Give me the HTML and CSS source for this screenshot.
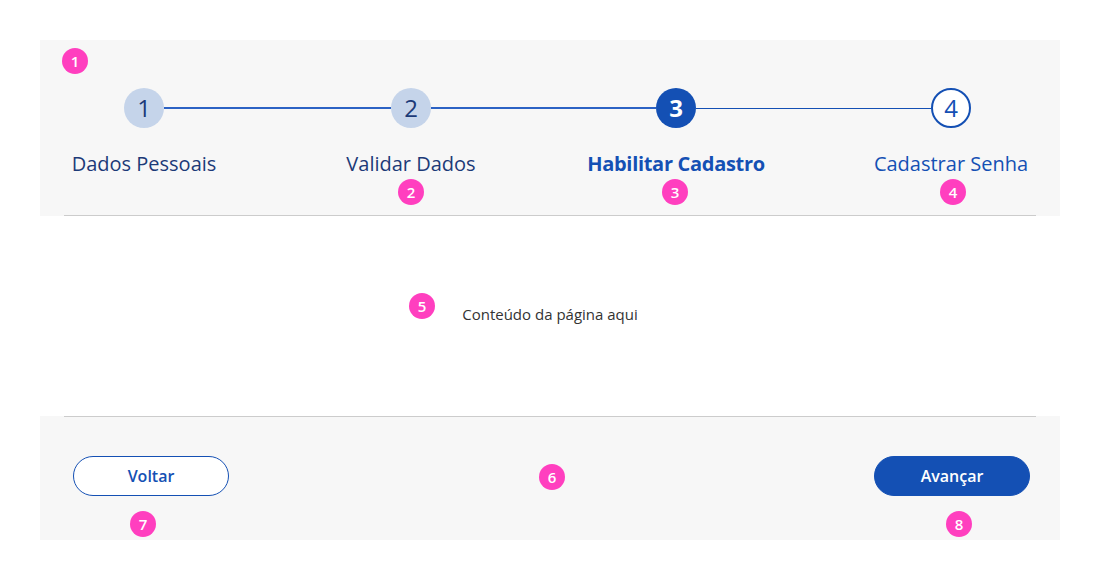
FILE: index.html
```html
<!DOCTYPE html>
<html lang="pt-BR">
<head>
<meta charset="utf-8">
<title>Cadastro</title>
<link rel="stylesheet" href="styles.css">
</head>
<body>
<div class="wizard">
  <header class="wizard-header">
    <div class="stepper">
      <div class="step step-done">
        <span class="step-circle">1</span>
        <span class="step-label">Dados Pessoais</span>
      </div>
      <div class="connector connector-done connector-first"></div>
      <div class="step step-done">
        <span class="step-circle">2</span>
        <span class="step-label">Validar Dados</span>
      </div>
      <div class="connector connector-done connector-second"></div>
      <div class="step step-current">
        <span class="step-circle">3</span>
        <span class="step-label">Habilitar Cadastro</span>
      </div>
      <div class="connector connector-next connector-third"></div>
      <div class="step step-next">
        <span class="step-circle">4</span>
        <span class="step-label">Cadastrar Senha</span>
      </div>
    </div>
    <div class="divider"></div>
  </header>

  <main class="wizard-content">
    <p class="content-text">Conteúdo da página aqui</p>
  </main>

  <footer class="wizard-footer">
    <div class="divider"></div>
    <div class="actions">
      <button class="btn btn-outline">Voltar</button>
      <button class="btn btn-primary">Avançar</button>
    </div>
  </footer>

  <span class="badge badge-1">1</span>
  <span class="badge badge-2">2</span>
  <span class="badge badge-3">3</span>
  <span class="badge badge-4">4</span>
  <span class="badge badge-5">5</span>
  <span class="badge badge-6">6</span>
  <span class="badge badge-7">7</span>
  <span class="badge badge-8">8</span>
</div>
</body>
</html>
```

FILE: styles.css
```css
* { box-sizing: border-box; }

html, body {
  margin: 0;
  background: #ffffff;
}

body {
  padding: 40px;
  font-family: "Open Sans", "Liberation Sans", sans-serif;
  color: #1c3a78;
}

.wizard {
  position: relative;
  width: 1020px;
}

.wizard-header {
  background: #f7f7f7;
  padding-top: 48px;
}

.stepper {
  display: flex;
  align-items: flex-start;
  padding: 0 89px 39px 84px;
}

.step {
  width: 40px;
  flex: none;
  display: flex;
  flex-direction: column;
  align-items: center;
}

.step-circle {
  width: 40px;
  height: 40px;
  border-radius: 50%;
  display: flex;
  align-items: center;
  justify-content: center;
  font-size: 24px;
  line-height: 1;
}

.step-label {
  margin-top: 24px;
  white-space: nowrap;
  font-size: 20px;
  line-height: 24px;
}

.step-done .step-circle {
  background: #c5d4ea;
  color: #1c3a78;
}
.step-done .step-label { color: #1c3a78; }

.step-current .step-circle {
  background: #1450b4;
  color: #ffffff;
  font-weight: 700;
}
.step-current .step-label {
  color: #1450b4;
  font-weight: 700;
  letter-spacing: -0.3px;
}

.step-next .step-circle {
  background: #ffffff;
  border: 2px solid #1450b4;
  color: #1450b4;
}
.step-next .step-label { color: #1450b4; }

.connector {
  flex-basis: 0;
  margin-top: 19px;
}
.connector-first { flex-grow: 227; }
.connector-second { flex-grow: 225; }
.connector-third { flex-grow: 235; }

.connector-done {
  height: 2px;
  background: #2c62c4;
}
.connector-next {
  height: 1px;
  margin-top: 20px;
  background: #1450b4;
}

.divider {
  height: 1px;
  margin: 0 24px;
  background: #cccccc;
}

.wizard-content {
  height: 200px;
  display: flex;
  align-items: center;
  justify-content: center;
  background: #ffffff;
}

.content-text {
  margin: 0;
  padding-bottom: 5px;
  font-size: 15px;
  color: #333333;
}

.wizard-footer {
  background: #f7f7f7;
  height: 124px;
}

.actions {
  display: flex;
  justify-content: space-between;
  padding: 39px 30px 0 33px;
}

.btn {
  width: 156px;
  height: 40px;
  border-radius: 20px;
  font-family: "Open Sans", "Liberation Sans", sans-serif;
  font-size: 16px;
  font-weight: 600;
  cursor: pointer;
}

.btn-outline {
  background: #ffffff;
  border: 1px solid #1450b4;
  color: #1450b4;
}

.btn-primary {
  background: #1450b4;
  border: 1px solid #1450b4;
  color: #ffffff;
}

.badge {
  position: absolute;
  width: 26px;
  height: 26px;
  border-radius: 50%;
  background: #ff3fbf;
  color: #ffffff;
  font-size: 15px;
  font-weight: 600;
  display: flex;
  align-items: center;
  justify-content: center;
  line-height: 1;
}

.badge-1 { left: 22px; top: 8px; }
.badge-2 { left: 358px; top: 139px; }
.badge-3 { left: 622px; top: 139px; }
.badge-4 { left: 900px; top: 139px; }
.badge-5 { left: 369px; top: 253px; }
.badge-6 { left: 499px; top: 424px; }
.badge-7 { left: 90px; top: 471px; }
.badge-8 { left: 906px; top: 471px; }
```
